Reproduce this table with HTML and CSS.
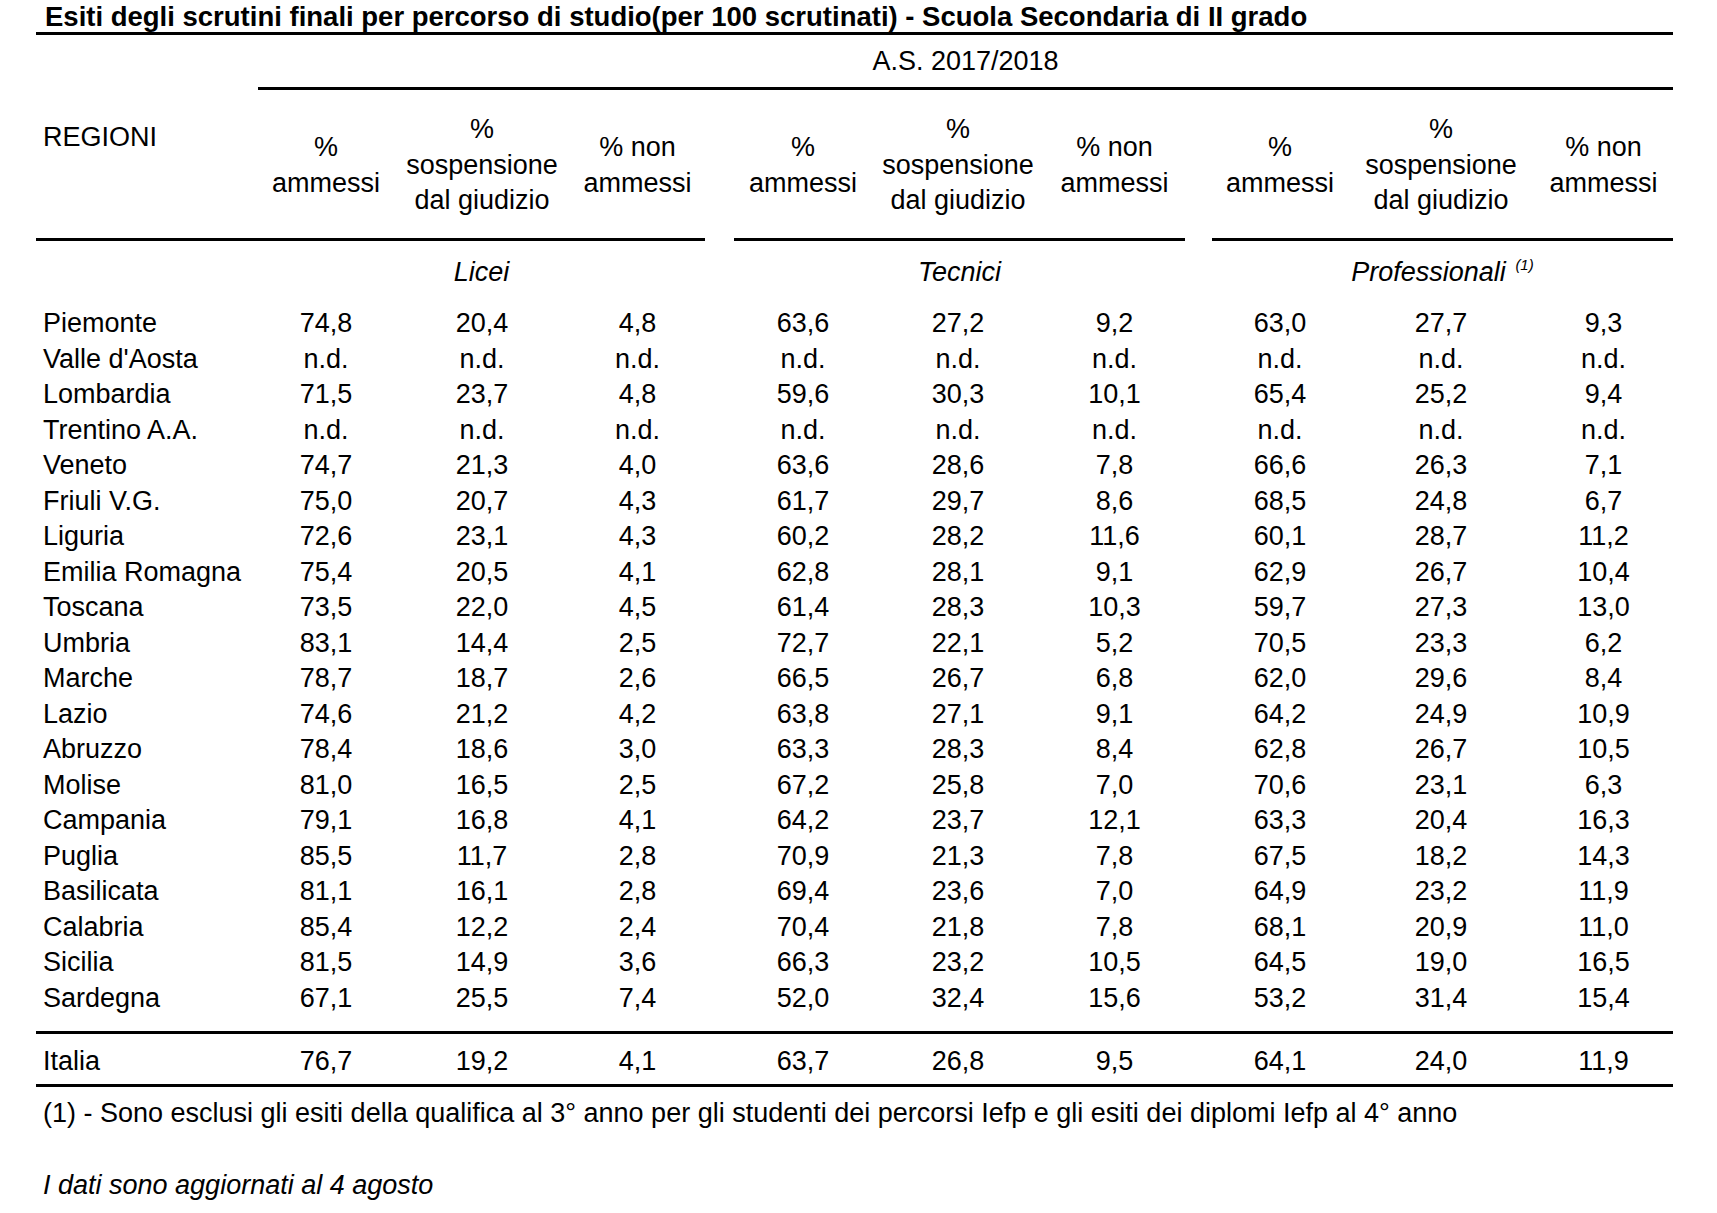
FILE: index.html
```html
<!DOCTYPE html>
<html lang="it">
<head>
<meta charset="utf-8">
<title>Esiti degli scrutini finali</title>
<link rel="stylesheet" href="styles.css">
</head>
<body>
<div class="page">
  <h1 class="title">Esiti degli scrutini finali per percorso di studio(per 100 scrutinati) - Scuola Secondaria di II grado</h1>
  <table class="tbl">
    <colgroup>
      <col class="w-reg"><col class="w-c1"><col class="w-c2"><col class="w-c3"><col class="w-gap1">
      <col class="w-c4"><col class="w-c5"><col class="w-c6"><col class="w-gap2">
      <col class="w-c7"><col class="w-c8"><col class="w-c9">
    </colgroup>
    <thead>
      <tr class="r-year">
        <td></td>
        <td colspan="11" class="year">A.S. 2017/2018</td>
      </tr>
      <tr class="r-head">
        <td class="reg-h ul">REGIONI</td>
        <td class="ul">%<br>ammessi</td>
        <td class="ul">%<br>sospensione<br>dal giudizio</td>
        <td class="ul">% non<br>ammessi</td>
        <td></td>
        <td class="ul">%<br>ammessi</td>
        <td class="ul">%<br>sospensione<br>dal giudizio</td>
        <td class="ul">% non<br>ammessi</td>
        <td></td>
        <td class="ul">%<br>ammessi</td>
        <td class="ul">%<br>sospensione<br>dal giudizio</td>
        <td class="ul">% non<br>ammessi</td>
      </tr>
      <tr class="r-group">
        <td></td>
        <td colspan="3">Licei</td>
        <td></td>
        <td colspan="3">Tecnici</td>
        <td></td>
        <td colspan="3">Professionali <sup class="note">(1)</sup></td>
      </tr>
    </thead>
    <tbody>
      <tr><td>Piemonte</td><td>74,8</td><td>20,4</td><td>4,8</td><td></td><td>63,6</td><td>27,2</td><td>9,2</td><td></td><td>63,0</td><td>27,7</td><td>9,3</td></tr>
      <tr><td>Valle d'Aosta</td><td>n.d.</td><td>n.d.</td><td>n.d.</td><td></td><td>n.d.</td><td>n.d.</td><td>n.d.</td><td></td><td>n.d.</td><td>n.d.</td><td>n.d.</td></tr>
      <tr><td>Lombardia</td><td>71,5</td><td>23,7</td><td>4,8</td><td></td><td>59,6</td><td>30,3</td><td>10,1</td><td></td><td>65,4</td><td>25,2</td><td>9,4</td></tr>
      <tr><td>Trentino A.A.</td><td>n.d.</td><td>n.d.</td><td>n.d.</td><td></td><td>n.d.</td><td>n.d.</td><td>n.d.</td><td></td><td>n.d.</td><td>n.d.</td><td>n.d.</td></tr>
      <tr><td>Veneto</td><td>74,7</td><td>21,3</td><td>4,0</td><td></td><td>63,6</td><td>28,6</td><td>7,8</td><td></td><td>66,6</td><td>26,3</td><td>7,1</td></tr>
      <tr><td>Friuli V.G.</td><td>75,0</td><td>20,7</td><td>4,3</td><td></td><td>61,7</td><td>29,7</td><td>8,6</td><td></td><td>68,5</td><td>24,8</td><td>6,7</td></tr>
      <tr><td>Liguria</td><td>72,6</td><td>23,1</td><td>4,3</td><td></td><td>60,2</td><td>28,2</td><td>11,6</td><td></td><td>60,1</td><td>28,7</td><td>11,2</td></tr>
      <tr><td>Emilia Romagna</td><td>75,4</td><td>20,5</td><td>4,1</td><td></td><td>62,8</td><td>28,1</td><td>9,1</td><td></td><td>62,9</td><td>26,7</td><td>10,4</td></tr>
      <tr><td>Toscana</td><td>73,5</td><td>22,0</td><td>4,5</td><td></td><td>61,4</td><td>28,3</td><td>10,3</td><td></td><td>59,7</td><td>27,3</td><td>13,0</td></tr>
      <tr><td>Umbria</td><td>83,1</td><td>14,4</td><td>2,5</td><td></td><td>72,7</td><td>22,1</td><td>5,2</td><td></td><td>70,5</td><td>23,3</td><td>6,2</td></tr>
      <tr><td>Marche</td><td>78,7</td><td>18,7</td><td>2,6</td><td></td><td>66,5</td><td>26,7</td><td>6,8</td><td></td><td>62,0</td><td>29,6</td><td>8,4</td></tr>
      <tr><td>Lazio</td><td>74,6</td><td>21,2</td><td>4,2</td><td></td><td>63,8</td><td>27,1</td><td>9,1</td><td></td><td>64,2</td><td>24,9</td><td>10,9</td></tr>
      <tr><td>Abruzzo</td><td>78,4</td><td>18,6</td><td>3,0</td><td></td><td>63,3</td><td>28,3</td><td>8,4</td><td></td><td>62,8</td><td>26,7</td><td>10,5</td></tr>
      <tr><td>Molise</td><td>81,0</td><td>16,5</td><td>2,5</td><td></td><td>67,2</td><td>25,8</td><td>7,0</td><td></td><td>70,6</td><td>23,1</td><td>6,3</td></tr>
      <tr><td>Campania</td><td>79,1</td><td>16,8</td><td>4,1</td><td></td><td>64,2</td><td>23,7</td><td>12,1</td><td></td><td>63,3</td><td>20,4</td><td>16,3</td></tr>
      <tr><td>Puglia</td><td>85,5</td><td>11,7</td><td>2,8</td><td></td><td>70,9</td><td>21,3</td><td>7,8</td><td></td><td>67,5</td><td>18,2</td><td>14,3</td></tr>
      <tr><td>Basilicata</td><td>81,1</td><td>16,1</td><td>2,8</td><td></td><td>69,4</td><td>23,6</td><td>7,0</td><td></td><td>64,9</td><td>23,2</td><td>11,9</td></tr>
      <tr><td>Calabria</td><td>85,4</td><td>12,2</td><td>2,4</td><td></td><td>70,4</td><td>21,8</td><td>7,8</td><td></td><td>68,1</td><td>20,9</td><td>11,0</td></tr>
      <tr><td>Sicilia</td><td>81,5</td><td>14,9</td><td>3,6</td><td></td><td>66,3</td><td>23,2</td><td>10,5</td><td></td><td>64,5</td><td>19,0</td><td>16,5</td></tr>
      <tr class="last"><td>Sardegna</td><td>67,1</td><td>25,5</td><td>7,4</td><td></td><td>52,0</td><td>32,4</td><td>15,6</td><td></td><td>53,2</td><td>31,4</td><td>15,4</td></tr>
    </tbody>
    <tfoot>
      <tr class="r-total"><td>Italia</td><td>76,7</td><td>19,2</td><td>4,1</td><td></td><td>63,7</td><td>26,8</td><td>9,5</td><td></td><td>64,1</td><td>24,0</td><td>11,9</td></tr>
    </tfoot>
  </table>
  <p class="footnote">(1) - Sono esclusi gli esiti della qualifica al 3° anno per gli studenti dei percorsi Iefp e gli esiti dei diplomi Iefp al 4° anno</p>
  <p class="updated">I dati sono aggiornati al 4 agosto</p>
</div>
</body>
</html>
```

FILE: styles.css
```css
html, body {
  margin: 0;
  padding: 0;
  background: #ffffff;
}

body {
  font-family: "Liberation Sans", Arial, sans-serif;
  color: #000000;
}

.page {
  width: 1637px;
  margin-left: 36px;
}

.title {
  margin: 0;
  padding: 2px 0 0 9px;
  font-size: 27.5px;
  font-weight: bold;
  line-height: 30px;
  border-bottom: 3px solid #000;
  white-space: nowrap;
}

.tbl {
  width: 1637px;
  table-layout: fixed;
  border-collapse: separate;
  border-spacing: 0;
  font-size: 27px;
  line-height: 35px;
}

.w-reg { width: 222px; }
.w-c1 { width: 136px; }
.w-c2 { width: 176px; }
.w-c3 { width: 135px; }
.w-gap1 { width: 29px; }
.w-c4 { width: 138px; }
.w-c5 { width: 172px; }
.w-c6 { width: 141px; }
.w-gap2 { width: 27px; }
.w-c7 { width: 136px; }
.w-c8 { width: 186px; }
.w-c9 { width: 139px; }

.tbl td {
  padding: 0;
  text-align: center;
  vertical-align: middle;
  white-space: nowrap;
}

.tbl td:first-child {
  text-align: left;
  padding-left: 7px;
}

.r-year td {
  padding-top: 9px;
  padding-bottom: 8px;
}

.r-year .year {
  border-bottom: 3px solid #000;
}

.r-head td {
  height: 151px;
  box-sizing: border-box;
  line-height: 35.6px;
  padding-top: 3px;
}

.r-head .ul {
  border-bottom: 3px solid #000;
}

.r-head .reg-h {
  vertical-align: top;
  padding-top: 30px;
}

.r-group td {
  padding-top: 14px;
  padding-bottom: 16px;
  font-style: italic;
}

.note {
  font-size: 15px;
  line-height: 0;
  vertical-align: 11px;
  margin-left: 2px;
}

.tbl tbody td {
  height: 35.5px;
  line-height: 35.5px;
}

.tbl tbody tr.last td {
  padding-bottom: 15px;
}

.r-total td {
  border-top: 3px solid #000;
  border-bottom: 3px solid #000;
  padding-top: 10px;
  padding-bottom: 5px;
}

.footnote {
  margin: 9px 0 0 0;
  padding-left: 7px;
  font-size: 27px;
  line-height: 35px;
  white-space: nowrap;
}

.updated {
  margin: 37px 0 0 0;
  padding-left: 7px;
  font-size: 27px;
  line-height: 35px;
  font-style: italic;
}
```
